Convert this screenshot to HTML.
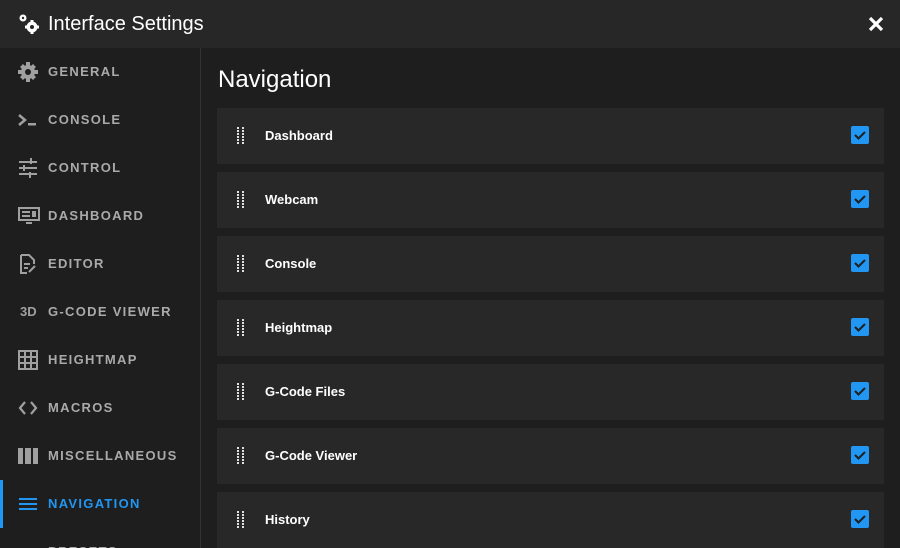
<!DOCTYPE html>
<html><head><style>
*{margin:0;padding:0;box-sizing:border-box}
html,body{width:900px;height:548px;overflow:hidden}
body{background:#1e1e1e;font-family:"Liberation Sans",sans-serif;color:#fff;position:relative}
.hdr{position:absolute;left:0;top:0;width:900px;height:48px;background:#272727}
.hdr .t{position:absolute;left:48px;top:13px;font-size:20px;color:#fff}
.side{position:absolute;left:0;top:48px;width:201px;height:500px;border-right:1px solid #333}
.it{position:absolute;left:0;width:200px;height:48px}
.it .l{position:absolute;left:48px;top:16px;font-size:13px;font-weight:bold;letter-spacing:1.3px;color:#aaa}
.it svg{position:absolute;left:18px;top:14px}
.it.act .l{color:#2196f3}
.it.act:before{content:"";position:absolute;left:0;top:0;width:3px;height:48px;background:#2196f3}
h1{position:absolute;left:218px;top:66px;font-size:24px;font-weight:normal}
.row{position:absolute;left:217px;width:667px;height:56px;background:#282828}
.row .n{position:absolute;left:48px;top:20px;font-size:13px;font-weight:bold}
.row .d{position:absolute;left:20px;top:19px;width:7px;height:18px;background:radial-gradient(circle at 1px 1px,#fff 0.9px,transparent 1.2px) 0 0/5px 3px}
.row .c{position:absolute;left:634px;top:18px;width:18px;height:18px;background:#2196f3;border-radius:2px}
</style></head><body>
<div class="hdr">
<svg style="position:absolute;left:18px;top:13px" width="22" height="22" viewBox="0 0 22 22" fill="#fff"><circle cx="5" cy="5" r="3.5"/><circle cx="5" cy="5" r="1.2" fill="#272727"/><circle cx="14" cy="14" r="5.5"/><path d="M12.5 7h3v3h-3zM12.5 18h3v3h-3zM7 12.5h3v3H7zM18 12.5h3v3h-3z"/><circle cx="14" cy="14" r="2" fill="#272727"/></svg>
<div class="t">Interface Settings</div>
<svg style="position:absolute;left:867px;top:15px" width="18" height="18" viewBox="0 0 18 18"><path d="M3 3L15 15M15 3L3 15" stroke="#fff" stroke-width="3.2"/></svg>
</div>
<div class="side">
<div class="it" style="top:0"><svg width="20" height="20" viewBox="0 0 20 20" fill="#a0a0a0"><circle cx="10" cy="10" r="7"/><path d="M8 0h4v4H8zM8 16h4v4H8zM0 8h4v4H0zM16 8h4v4h-4z"/><path d="M2 5l3-3 3 3-3 3zM12 15l3-3 3 3-3 3zM2 15l3-3 3 3-3 3zM12 5l3-3 3 3-3 3z"/><circle cx="10" cy="10" r="3" fill="#1e1e1e"/></svg><div class="l">GENERAL</div></div>
<div class="it" style="top:48px"><svg width="20" height="20" viewBox="0 0 20 20"><path d="M1 5l6 5-6 5" stroke="#a0a0a0" stroke-width="2.5" fill="none"/><rect x="10" y="13" width="8" height="2.5" fill="#a0a0a0"/></svg><div class="l">CONSOLE</div></div>
<div class="it" style="top:96px"><svg width="20" height="20" viewBox="0 0 20 20" fill="#a0a0a0"><rect x="1" y="3" width="18" height="2"/><rect x="1" y="9" width="18" height="2"/><rect x="1" y="15" width="18" height="2"/><rect x="12" y="0" width="2" height="6"/><rect x="5" y="7" width="2" height="6"/><rect x="11" y="14" width="2" height="6"/></svg><div class="l">CONTROL</div></div>
<div class="it" style="top:144px"><svg width="22" height="20" viewBox="0 0 22 20" fill="#a0a0a0"><path d="M0 1h22v14H0z M2 3v10h18V3z" fill-rule="evenodd"/><rect x="4" y="5" width="8" height="2"/><rect x="4" y="9" width="8" height="2"/><rect x="14" y="5" width="4" height="6"/><rect x="8" y="16" width="6" height="2"/></svg><div class="l">DASHBOARD</div></div>
<div class="it" style="top:192px"><svg width="20" height="20" viewBox="0 0 20 20" fill="none" stroke="#a0a0a0" stroke-width="2"><path d="M3 1h8l5 5v4M3 1v18h6"/><path d="M6 10h6M6 14h4M11 18l6-6"/></svg><div class="l">EDITOR</div></div>
<div class="it" style="top:240px"><div style="position:absolute;left:20px;top:16px;font-size:13px;font-weight:bold;color:#a0a0a0">3D</div><div class="l">G-CODE VIEWER</div></div>
<div class="it" style="top:288px"><svg width="20" height="20" viewBox="0 0 20 20" fill="none" stroke="#a0a0a0" stroke-width="2"><rect x="1" y="1" width="18" height="18"/><path d="M7 1v18M13 1v18M1 7h18M1 13h18"/></svg><div class="l">HEIGHTMAP</div></div>
<div class="it" style="top:336px"><svg width="20" height="20" viewBox="0 0 20 20" fill="none" stroke="#a0a0a0" stroke-width="2.2"><path d="M7 4l-5 6 5 6M13 4l5 6-5 6"/></svg><div class="l">MACROS</div></div>
<div class="it" style="top:384px"><svg width="20" height="20" viewBox="0 0 20 20" fill="#a0a0a0"><rect x="0" y="2" width="5" height="16"/><rect x="7" y="2" width="6" height="16"/><rect x="15" y="2" width="5" height="16"/></svg><div class="l">MISCELLANEOUS</div></div>
<div class="it act" style="top:432px"><svg width="20" height="20" viewBox="0 0 20 20" fill="#2196f3"><rect x="1" y="4" width="18" height="2"/><rect x="1" y="9" width="18" height="2"/><rect x="1" y="14" width="18" height="2"/></svg><div class="l">NAVIGATION</div></div>
<div class="it" style="top:480px"><div class="l">PRESETS</div></div>
</div>
<h1>Navigation</h1>
<div class="row" style="top:108px"><div class="d"></div><div class="n">Dashboard</div><div class="c"><svg width="18" height="18" viewBox="0 0 18 18"><path d="M4 9l3.5 3.5L14 6" stroke="#1e1e1e" stroke-width="2" fill="none"/></svg></div></div>
<div class="row" style="top:172px"><div class="d"></div><div class="n">Webcam</div><div class="c"><svg width="18" height="18" viewBox="0 0 18 18"><path d="M4 9l3.5 3.5L14 6" stroke="#1e1e1e" stroke-width="2" fill="none"/></svg></div></div>
<div class="row" style="top:236px"><div class="d"></div><div class="n">Console</div><div class="c"><svg width="18" height="18" viewBox="0 0 18 18"><path d="M4 9l3.5 3.5L14 6" stroke="#1e1e1e" stroke-width="2" fill="none"/></svg></div></div>
<div class="row" style="top:300px"><div class="d"></div><div class="n">Heightmap</div><div class="c"><svg width="18" height="18" viewBox="0 0 18 18"><path d="M4 9l3.5 3.5L14 6" stroke="#1e1e1e" stroke-width="2" fill="none"/></svg></div></div>
<div class="row" style="top:364px"><div class="d"></div><div class="n">G-Code Files</div><div class="c"><svg width="18" height="18" viewBox="0 0 18 18"><path d="M4 9l3.5 3.5L14 6" stroke="#1e1e1e" stroke-width="2" fill="none"/></svg></div></div>
<div class="row" style="top:428px"><div class="d"></div><div class="n">G-Code Viewer</div><div class="c"><svg width="18" height="18" viewBox="0 0 18 18"><path d="M4 9l3.5 3.5L14 6" stroke="#1e1e1e" stroke-width="2" fill="none"/></svg></div></div>
<div class="row" style="top:492px"><div class="d"></div><div class="n">History</div><div class="c"><svg width="18" height="18" viewBox="0 0 18 18"><path d="M4 9l3.5 3.5L14 6" stroke="#1e1e1e" stroke-width="2" fill="none"/></svg></div></div>
</body></html>
